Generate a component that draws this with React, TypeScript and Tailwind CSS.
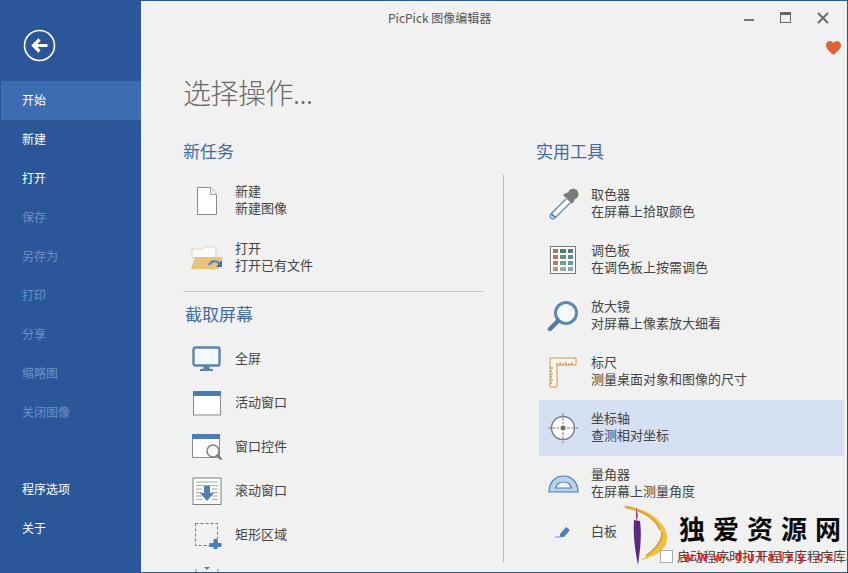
import React from "react";

const FONT = "[font-family:'Noto_Sans_CJK_SC','Liberation_Sans',sans-serif]";

const sideItems = [
  { label: "开始", active: true },
  { label: "新建" },
  { label: "打开" },
  { label: "保存", disabled: true },
  { label: "另存为", disabled: true },
  { label: "打印", disabled: true },
  { label: "分享", disabled: true },
  { label: "缩略图", disabled: true },
  { label: "关闭图像", disabled: true },
];

const Sidebar: React.FC = () => (
  <aside className="w-[140px] shrink-0 bg-[#2b579a] flex flex-col text-[12px]">
    <div className="h-[80px] pt-[28px] pl-[22px]">
      <svg width="33" height="33" viewBox="0 0 33 33" fill="none">
        <circle cx="16.5" cy="16.5" r="15" stroke="#fff" strokeWidth="1.6" />
        <path d="M24.5 16.5H11M16.5 10.5l-6 6 6 6" stroke="#fff" strokeWidth="3.2" />
      </svg>
    </div>
    {sideItems.map((item) => (
      <div
        key={item.label}
        className={`h-[39px] pb-[2px] flex items-center pl-[21px] ${item.active ? "bg-[#3d6cb3] text-white" : item.disabled ? "text-[#6e90c6]" : "text-white"}`}
      >
        {item.label}
      </div>
    ))}
    <div className="mt-[38px] h-[39px] pb-[2px] flex items-center pl-[21px] text-white">程序选项</div>
    <div className="h-[39px] pb-[2px] flex items-center pl-[21px] text-white">关于</div>
  </aside>
);

const NewIcon = () => (
  <svg width="24" height="30" viewBox="0 0 24 30" fill="none">
    <path d="M2.5 1.500h13l6 7v20h-19z" fill="#fff" stroke="#8a8a8a" />
    <path d="M15.500 1.500v7h6" fill="#f4f4f4" stroke="#a8a8a8" />
  </svg>
);

const OpenIcon = () => (
  <svg width="34" height="28" viewBox="0 0 34 28" fill="none">
    <path d="M2 5h10l2 -2h10l2 3v8H2z" fill="#fafafa" stroke="#e0d3b8" />
    <path d="M1 25l4-12h28l-4 12z" fill="#ecc27f" />
    <path d="M19 21c3-5 7-5 11-1" stroke="#5b86b8" strokeWidth="2.4" />
    <path d="M32 16v7h-6z" fill="#3f70a8" />
  </svg>
);

const ScreenIcon = () => (
  <svg width="30" height="26" viewBox="0 0 30 26" fill="none">
    <rect x="1.5" y="1.5" width="26" height="18" rx="2" fill="#f3faff" stroke="#5d83ad" strokeWidth="2.4" />
    <path d="M12 20h5l1 3h3v2H8v-2h3z" fill="#5d83ad" />
  </svg>
);

const WindowIcon = () => (
  <svg width="30" height="26" viewBox="0 0 30 26" fill="none">
    <rect x="1.5" y="1.5" width="27" height="23.5" fill="#fff" stroke="#8b8b8b" />
    <rect x="1" y="1" width="28" height="5" fill="#4c7cb5" />
  </svg>
);

const ControlIcon = () => (
  <svg width="32" height="28" viewBox="0 0 32 28" fill="none">
    <path d="M1.500 1.500h27v23h-27z" fill="#fff" stroke="#8b8b8b" />
    <rect x="1" y="1" width="28" height="5" fill="#4c7cb5" />
    <circle cx="22" cy="18" r="6" fill="#f5f5f5" stroke="#808080" strokeWidth="1.5" />
    <path d="M26 22l4.500 4.500" stroke="#777" strokeWidth="2.4" />
  </svg>
);

const ScrollIcon = () => (
  <svg width="30" height="28" viewBox="0 0 30 28" fill="none">
    <rect x="1" y="1" width="28" height="26.500" fill="#fff" stroke="#7d7d7d" />
    <path d="M4 5h22M4 8.500h22M4 12h6M20 12h6M4 15.500h6M20 15.500h6M4 19h6M20 19h6M4 22.500h6M20 22.500h6" stroke="#a9a9a9" />
    <path d="M12 9h6v7h4l-7 8-7-8h4z" fill="#4f7fb5" />
  </svg>
);

const RegionIcon = () => (
  <svg width="30" height="27" viewBox="0 0 30 27" fill="none">
    <rect x="3.500" y="1.500" width="22" height="22" stroke="#777" strokeDasharray="3 2" />
    <path d="M21.500 17h4v4h4v4h-4v2h-4v-2h-4v-4h4z" fill="#4a7db8" />
  </svg>
);

const PartialIcon = () => (
  <svg width="30" height="8" viewBox="0 0 30 8" fill="none">
    <path d="M4 4v3M26 4v3" stroke="#888" />
    <path d="M12 2h6l-3 3z" fill="#6a7f99" />
  </svg>
);

const DropperIcon = () => (
  <svg width="32" height="32" viewBox="0 0 32 32" fill="none">
    <path d="M19 11L4 26c-1 1.500-1 3 0 4s2.500 1 4 0l15-15" fill="#fff" stroke="#5c8ab5" strokeWidth="1.300" />
    <path d="M4 25.500l4 4" stroke="#5c8ab5" strokeWidth="2" />
    <path d="M16 7l9 9 2-3 1-2c3-1 4-4 3-7S26 0 23 1.500L21 4.500l-2 .5z" fill="#7a7a7a" />
  </svg>
);

const PaletteIcon = () => {
  const colors = ["#b5705f", "#4d8068", "#4f7a94", "#b5705f", "#5f9480", "#5f8ba6", "#b87a68", "#72a08f", "#7096ab", "#c29080", "#8eb0a4", "#8ba4b5"];
  return (
    <div className="w-[26px] h-[28px] bg-white border border-[#777] grid grid-cols-3 gap-[2px] p-[2px] content-between">
      {colors.map((color, i) => (
        <div key={i} className="h-[4px]" style={{ backgroundColor: color }} />
      ))}
    </div>
  );
};

const MagnifierIcon = () => (
  <svg width="32" height="33" viewBox="0 0 32 33" fill="none">
    <circle cx="19" cy="13" r="10.500" fill="#f6f9fc" stroke="#5d8ab5" strokeWidth="3" />
    <path d="M11 21L3 29" stroke="#54799f" strokeWidth="4.500" strokeLinecap="round" />
  </svg>
);

const RulerIcon = () => (
  <svg width="28" height="31" viewBox="0 0 28 31" fill="none">
    <path d="M1 1h26v7H8v22H1z" fill="#fbf5ee" stroke="#d9934f" />
    <path d="M8 8V6M11 8V5M14 8V6M17 8V5M20 8V6M23 8V5M1 11h3M1 14h2M1 17h3M1 20h2M1 23h3M1 26h2" stroke="#a07a50" />
  </svg>
);

const AxisIcon = () => (
  <svg width="30" height="30" viewBox="0 0 30 30" fill="none">
    <circle cx="15" cy="15" r="11.500" fill="#fdfdfd" stroke="#737b88" strokeWidth="1.400" />
    <path d="M15 0v11M15 19v11M0 15h11M19 15h11" stroke="#a96a6a" strokeDasharray="3 1.500" />
    <circle cx="15" cy="15" r="2.500" fill="#707070" />
  </svg>
);

const ProtractorIcon = () => (
  <svg width="31" height="18" viewBox="0 0 31 18" fill="none">
    <path d="M1 17C1 7 7.500 1 15.500 1S30 7 30 17z" fill="#b9d3ee" stroke="#4f7eae" strokeWidth="1.200" />
    <path d="M7.500 13c1-3.500 4-6 8-6s7 2.500 8 6z" fill="#f1f1f1" stroke="#4f7eae" strokeWidth="1.200" />
  </svg>
);

const EraserIcon = () => (
  <svg width="16" height="12" viewBox="0 0 16 12" fill="none">
    <path d="M5 8l6-7 4 3-6 7H5z" fill="#4f80ba" />
    <path d="M0 11h6" stroke="#7ea6d2" strokeWidth="1.200" />
  </svg>
);

const Row: React.FC<{ icon: React.ReactNode; title: string; sub?: string; height: string; active?: boolean }> = ({ icon, title, sub, height, active }) => (
  <div className={`${height} ${active ? "bg-[#d5e1f2]" : ""} flex items-center`}>
    <div className="w-[48px] mr-[4px] flex justify-center shrink-0">{icon}</div>
    <div className="pb-[4px] text-[13px] leading-[17px] text-[#444]">
      <div>{title}</div>
      {sub && <div>{sub}</div>}
    </div>
  </div>
);

// site logo and name stamped over the bottom right corner
const Watermark: React.FC = () => (
  <div className="absolute left-[620px] top-[503px] w-[227px] h-[69px] overflow-hidden">
    <svg className="absolute left-0 top-0" width="52" height="62" viewBox="0 0 52 62" fill="none">
      <path d="M0 1c18 2 36 9 44 24 6 13 0 25-24 31 9-6 19-12 20-25C41 19 24 8 0 1z" fill="#efc13f" />
      <path d="M4 3c15 3 30 10 35 23M41 28c1 9-7 17-16 24" stroke="#e39a38" strokeWidth="1.800" />
      <path d="M13 16l6 1c2 15 0 30-2 44-3-14-5-30-4-45z" fill="#5a2a85" />
      <path d="M15 3l2 9-2 5z" fill="#b0327a" />
    </svg>
    <div className="absolute left-[58px] top-[8px] flex gap-[8px] text-[26px] leading-[32px] font-bold text-[#0b0b0b] [font-family:'Noto_Sans_CJK_SC',serif] whitespace-nowrap">
      <span>独</span>
      <span>爱</span>
      <span>资</span>
      <span>源</span>
      <span>网</span>
    </div>
    <div className="absolute left-[39px] top-[45px] flex items-center gap-[4px] text-[13px] leading-[14px] text-[#444] whitespace-nowrap">
      <div className="w-[13px] h-[13px] shrink-0 bg-white border border-[#aaa]" />
      <span>启动程序时打开程序库程序库程序</span>
    </div>
    <div className="absolute left-[62px] top-[45px] text-[12px] leading-[14px] font-bold tracking-[4.5px] text-[#ee1c25] whitespace-nowrap">www.dulaizy.cc</div>
  </div>
);

const Main: React.FC = () => (
  <main className="flex-1 min-w-0 bg-[#f1f1f1] flex flex-col">
    <div className="h-[33px] shrink-0 flex items-center pl-[247px] text-[12px] text-[#555]">
      <span>PicPick 图像编辑器</span>
      <div className="ml-auto flex items-center text-[#666]">
        <svg width="10" height="3" viewBox="0 0 10 3" className="mt-[5px]"><rect width="10" height="2" fill="#777" /></svg>
        <svg width="11" height="11" viewBox="0 0 11 11" className="ml-[26px]" fill="none">
          <rect x=".5" y=".5" width="10" height="10" stroke="#666" />
          <rect x="0" y="0" width="11" height="3" fill="#666" />
        </svg>
        <svg width="12" height="12" viewBox="0 0 12 12" className="ml-[26px] mr-[18px]" fill="none">
          <path d="M1 1l10 10M11 1L1 11" stroke="#666" strokeWidth="1.800" />
        </svg>
      </div>
    </div>
    <div className="flex justify-end pr-[6px] pt-[7px] h-[22px] shrink-0">
      <svg width="15" height="14" viewBox="0 0 15 14"><path d="M7.500 14C3 10 0 7.500 0 4.200 0 1.800 1.800 0 4 0c1.500 0 2.700.8 3.500 2C8.300.8 9.500 0 11 0c2.200 0 4 1.800 4 4.200 0 3.300-3 5.800-7.500 9.800z" fill="#e0633c" /></svg>
    </div>
    <h1 className="h-[36px] shrink-0 mt-[18px] pl-[42px] text-[28px] leading-[36px] font-light tracking-[-0.5px] text-[#6a6a6a]">选择操作...</h1>

    <div className="flex flex-1 min-h-0 mt-[30px] overflow-hidden">
      {/* left column */}
      <div className="w-[300px] ml-[42px] shrink-0">
        <h2 className="text-[17px] leading-[22px] text-[#3f6aa5]">新任务</h2>
        <div className="mt-[10px]">
          <Row icon={<NewIcon />} title="新建" sub="新建图像" height="h-[57px]" />
          <Row icon={<OpenIcon />} title="打开" sub="打开已有文件" height="h-[57px]" />
        </div>
        <div className="h-px bg-[#c6c6c6] mt-[5px]" />
        <h2 className="mt-[11px] pl-[2px] text-[17px] leading-[22px] text-[#3f6aa5]">截取屏幕</h2>
        <div className="mt-[12px]">
          <Row icon={<ScreenIcon />} title="全屏" height="h-[44px]" />
          <Row icon={<WindowIcon />} title="活动窗口" height="h-[44px]" />
          <Row icon={<ControlIcon />} title="窗口控件" height="h-[44px]" />
          <Row icon={<ScrollIcon />} title="滚动窗口" height="h-[44px]" />
          <Row icon={<RegionIcon />} title="矩形区域" height="h-[44px]" />
          <div className="w-[48px] flex justify-center pt-[8px]"><PartialIcon /></div>
        </div>
      </div>

      {/* divider */}
      <div className="w-px bg-[#b9b9b9] ml-[20px] mt-[35px] mb-[10px] shrink-0" />

      {/* right column */}
      <div className="w-[305px] ml-[35px] shrink-0">
        <h2 className="-ml-[3px] text-[17px] leading-[22px] text-[#3f6aa5]">实用工具</h2>
        <div className="mt-[14px]">
          <Row icon={<DropperIcon />} title="取色器" sub="在屏幕上拾取颜色" height="h-[56px]" />
          <Row icon={<PaletteIcon />} title="调色板" sub="在调色板上按需调色" height="h-[56px]" />
          <Row icon={<MagnifierIcon />} title="放大镜" sub="对屏幕上像素放大细看" height="h-[56px]" />
          <Row icon={<RulerIcon />} title="标尺" sub="测量桌面对象和图像的尺寸" height="h-[56px]" />
          <Row icon={<AxisIcon />} title="坐标轴" sub="查测相对坐标" height="h-[56px]" active />
          <Row icon={<ProtractorIcon />} title="量角器" sub="在屏幕上测量角度" height="h-[56px]" />
          <Row icon={<EraserIcon />} title="白板" height="h-[40px]" />
        </div>
      </div>
    </div>
  </main>
);

const App: React.FC = () => (
  <div className={`relative w-[848px] h-[573px] overflow-hidden flex border border-[#2b579a] ${FONT}`}>
    <Sidebar />
    <Main />
    <Watermark />
  </div>
);

export default App;
